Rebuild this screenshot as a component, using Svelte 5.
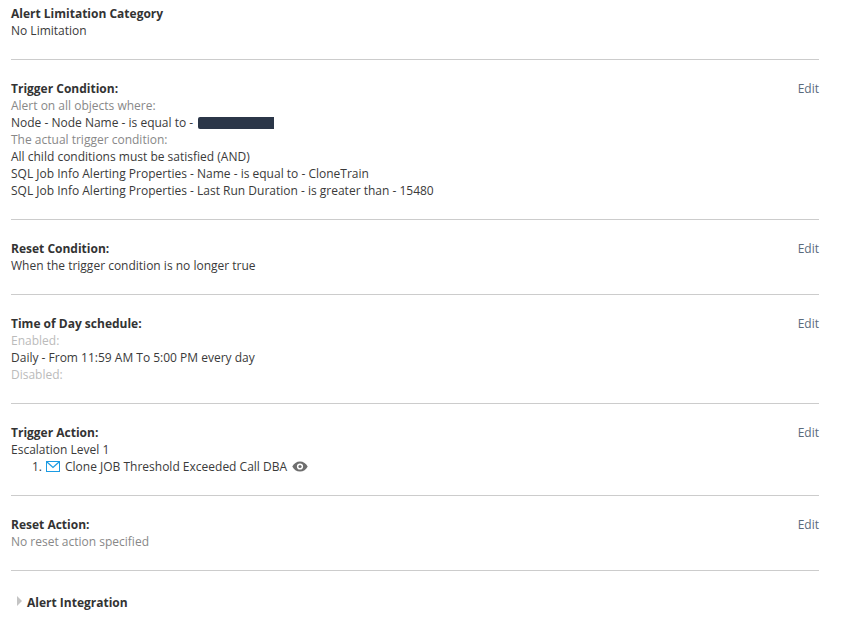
<script>
	const sections = [
		{
			title: 'Trigger Condition:',
			lines: [
				{ text: 'Alert on all objects where:', tone: 'muted' },
				{ text: 'Node - Node Name - is equal to - ', redacted: true },
				{ text: 'The actual trigger condition:', tone: 'muted' },
				{ text: 'All child conditions must be satisfied (AND)' },
				{ text: 'SQL Job Info Alerting Properties - Name - is equal to - CloneTrain' },
				{ text: 'SQL Job Info Alerting Properties - Last Run Duration - is greater than - 15480' }
			]
		},
		{
			title: 'Reset Condition:',
			lines: [{ text: 'When the trigger condition is no longer true' }]
		},
		{
			title: 'Time of Day schedule:',
			lines: [
				{ text: 'Enabled:', tone: 'faint' },
				{ text: 'Daily - From 11:59 AM To 5:00 PM every day' },
				{ text: 'Disabled:', tone: 'faint' }
			]
		}
	]
</script>

<main class="page">
	<section class="block first">
		<div class="body">
			<h3>Alert Limitation Category</h3>
			<p>No Limitation</p>
		</div>
	</section>

	{#each sections as section}
		<section class="block">
			<div class="body">
				<h3>{section.title}</h3>
				{#each section.lines as line}
					<p class={line.tone}>
						{line.text}{#if line.redacted}<span class="redacted"></span>{/if}
					</p>
				{/each}
			</div>
			<span class="edit">Edit</span>
		</section>
	{/each}

	<section class="block">
		<div class="body">
			<h3>Trigger Action:</h3>
			<p>Escalation Level 1</p>
			<p class="action">
				<span class="num">1.</span>
				<svg class="mail" width="14" height="11" viewBox="0 0 14 11" aria-hidden="true">
					<rect x="0.5" y="0.5" width="13" height="10" fill="none" stroke="#1b9be3" />
					<path d="M1 1l6 5.5L13 1" fill="none" stroke="#1b9be3" stroke-width="1.2" />
				</svg>
				<span>Clone JOB Threshold Exceeded Call DBA</span>
				<svg class="eye" width="16" height="11" viewBox="0 0 16 11" aria-hidden="true">
					<path
						fill-rule="evenodd"
						d="M8 0.5C4.6 0.5 1.8 2.5 0.3 5.5 1.8 8.5 4.6 10.5 8 10.5s6.2-2 7.7-5C14.2 2.5 11.4 0.5 8 0.5zM8 2.4a3.1 3.1 0 1 1 0 6.2 3.1 3.1 0 0 1 0-6.2z"
						fill="#6e6e6e"
					/>
					<circle cx="8" cy="5.5" r="1.6" fill="#6e6e6e" />
				</svg>
			</p>
		</div>
		<span class="edit">Edit</span>
	</section>

	<section class="block">
		<div class="body">
			<h3>Reset Action:</h3>
			<p class="muted">No reset action specified</p>
		</div>
		<span class="edit">Edit</span>
	</section>

	<div class="collapsed">
		<span class="arrow"></span>
		<h3>Alert Integration</h3>
	</div>
</main>

<style>
	:global(body) {
		background: #fff;
	}

	.page {
		width: 808px;
		margin-left: 11px;
		font-family: 'Open Sans', sans-serif;
		font-size: 12px;
		line-height: 17px;
		color: #3a3a3a;
	}

	.block {
		display: flex;
		justify-content: space-between;
		padding: 20px 0;
		border-bottom: 1px solid #ccc;
	}

	.block.first {
		padding-top: 5px;
	}

	h3 {
		margin: 0;
		font-size: 12px;
		font-weight: 700;
		color: #333;
	}

	p {
		margin: 0;
	}

	.muted {
		color: #888;
	}

	.faint {
		color: #bbb;
	}

	.redacted {
		display: inline-block;
		width: 76px;
		height: 12px;
		margin-left: 2px;
		vertical-align: -2px;
		background: #2b3648;
		border-radius: 2px 0 0 2px;
	}

	.edit {
		color: #5b6b7c;
	}

	.action {
		display: flex;
		align-items: center;
		padding-left: 21px;
	}

	.num {
		margin-right: 4px;
	}

	.mail {
		margin-right: 5px;
	}

	.eye {
		margin-left: 5px;
	}

	.collapsed {
		display: flex;
		align-items: center;
		gap: 5px;
		padding-top: 23px;
		padding-left: 6px;
	}

	.arrow {
		width: 0;
		height: 0;
		margin-top: -3px;
		border-top: 5px solid transparent;
		border-bottom: 5px solid transparent;
		border-left: 5px solid #c4c4c4;
	}
</style>
